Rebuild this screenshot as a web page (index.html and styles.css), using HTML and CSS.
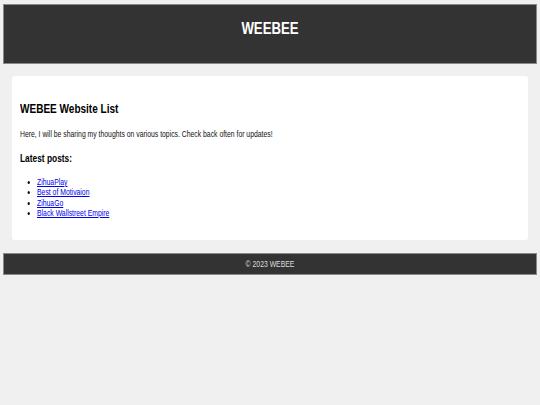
FILE: index.html
```html
<!DOCTYPE html>
<html lang="en">
<head>
<meta charset="utf-8">
<title>WEEBEE</title>
<link rel="stylesheet" href="styles.css">
</head>
<body>
<header class="site-header">
  <h1 class="site-title">WEEBEE</h1>
</header>
<main class="content">
  <h2 class="page-title">WEBEE Website List</h2>
  <p class="intro">Here, I will be sharing my thoughts on various topics. Check back often for updates!</p>
  <h3 class="section-title">Latest posts:</h3>
  <ul class="post-list">
    <li><a href="#">ZihuaPlay</a></li>
    <li><a href="#">Best of Motivaion</a></li>
    <li><a href="#">ZihuaGo</a></li>
    <li><a href="#">Black Wallstreet Empire</a></li>
  </ul>
</main>
<footer class="site-footer">
  <p class="copyright">© 2023 WEBEE</p>
</footer>
</body>
</html>
```
FILE: styles.css
```css
html {
  background: #f0f0f0;
}
body {
  margin: 4px 3px;
  font-family: "Liberation Sans", Arial, sans-serif;
  font-size: 9px;
  color: #111;
  background: #f0f0f0;
}
.site-header {
  background: #333;
  border: 1px solid #888;
  color: #fff;
  height: 60px;
  box-sizing: border-box;
  padding-top: 13.8px;
}
.site-title {
  margin: 0;
  text-align: center;
  font-size: 16.5px;
  font-weight: bold;
  line-height: 19px;
  transform: scaleX(0.8);
  transform-origin: center;
}
.content {
  background: #fff;
  margin: 12px 9px 13px;
  padding: 25.5px 8px 21.4px;
  border-radius: 3px;
}
.page-title,
.intro,
.section-title,
.post-list {
  transform: scaleX(0.76);
  transform-origin: left center;
}
.page-title {
  margin: 0 0 13px;
  font-size: 13.2px;
  line-height: 14.5px;
  color: #000;
}
.intro {
  margin: 0 0 12.5px;
  font-size: 9.3px;
  line-height: 10.5px;
}
.intro {
  transform: scaleX(0.735);
}
.section-title {
  margin: 0 0 12.2px;
  font-size: 11px;
  line-height: 12.5px;
  color: #000;
}
.post-list {
  margin: 0;
  padding-left: 22.4px;
  line-height: 10.5px;
}
.post-list a {
  color: #00e;
}
.site-footer {
  background: #333;
  border: 1px solid #888;
  color: #ddd;
  height: 22px;
  box-sizing: border-box;
  padding-top: 4.5px;
}
.copyright {
  margin: 0;
  text-align: center;
  line-height: 11px;
  transform: scaleX(0.76);
  transform-origin: center;
}
```
